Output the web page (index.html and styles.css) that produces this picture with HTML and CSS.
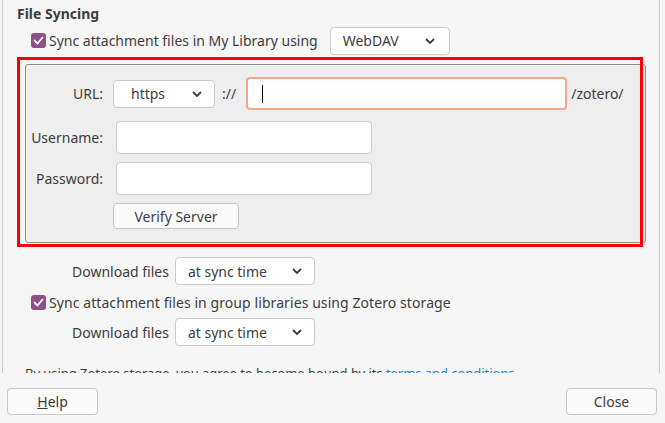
FILE: index.html
```html
<!DOCTYPE html>
<html>
<head>
<meta charset="utf-8">
<link rel="stylesheet" href="styles.css">
</head>
<body>
<div class="window">
  <div class="pane">
    <div class="heading">File Syncing</div>
    <div class="row sync-row">
      <span class="checkbox"><svg viewBox="0 0 15 15" width="15" height="15"><polyline points="3.5,7.5 6.5,10.5 11.5,4.5" fill="none" stroke="#fff" stroke-width="1.8" stroke-linecap="round" stroke-linejoin="round"/></svg></span>
      <span class="cb-label">Sync attachment files in My Library using</span>
      <div class="select select-webdav"><span>WebDAV</span><svg class="chev" viewBox="0 0 10 6" width="10" height="6"><polyline points="1,1 5,5 9,1" fill="none" stroke="#3d3d3d" stroke-width="1.8"/></svg></div>
    </div>
    <div class="groupbox">
      <div class="grow url-row">
        <span class="glabel">URL:</span>
        <div class="select select-scheme"><span>https</span><svg class="chev" viewBox="0 0 10 6" width="10" height="6"><polyline points="1,1 5,5 9,1" fill="none" stroke="#3d3d3d" stroke-width="1.8"/></svg></div>
        <span class="sep">://</span>
        <div class="input input-url focused"><span class="caret"></span></div>
        <span class="suffix">/zotero/</span>
      </div>
      <div class="grow">
        <span class="glabel">Username:</span>
        <div class="input input-field"></div>
      </div>
      <div class="grow">
        <span class="glabel">Password:</span>
        <div class="input input-field"></div>
      </div>
      <div class="grow">
        <span class="glabel"></span>
        <div class="button verify">Verify Server</div>
      </div>
    </div>
    <div class="row dl-row first-dl">
      <span class="dl-label">Download files</span>
      <div class="select select-dl"><span>at sync time</span><svg class="chev" viewBox="0 0 10 6" width="10" height="6"><polyline points="1,1 5,5 9,1" fill="none" stroke="#3d3d3d" stroke-width="1.8"/></svg></div>
    </div>
    <div class="row sync-row2">
      <span class="checkbox"><svg viewBox="0 0 15 15" width="15" height="15"><polyline points="3.5,7.5 6.5,10.5 11.5,4.5" fill="none" stroke="#fff" stroke-width="1.8" stroke-linecap="round" stroke-linejoin="round"/></svg></span>
      <span class="cb-label cb-label2">Sync attachment files in group libraries using Zotero storage</span>
    </div>
    <div class="row dl-row">
      <span class="dl-label">Download files</span>
      <div class="select select-dl"><span>at sync time</span><svg class="chev" viewBox="0 0 10 6" width="10" height="6"><polyline points="1,1 5,5 9,1" fill="none" stroke="#3d3d3d" stroke-width="1.8"/></svg></div>
    </div>
    <p class="terms">By using Zotero storage, you agree to become bound by its <a class="link">terms and conditions</a>.</p>
    <div class="highlight"></div>
  </div>
  <div class="footer">
    <div class="button footer-btn"><span class="ul">H</span>elp</div>
    <div class="button footer-btn">Close</div>
  </div>
</div>
</body>
</html>
```

FILE: styles.css
```css
* { box-sizing: border-box; }
html, body { margin: 0; padding: 0; }
body {
  background: #f6f6f6;
  font-family: "Noto Sans", "Open Sans", sans-serif;
  font-size: 14px;
  color: #3d3d3d;
  width: 665px;
  height: 423px;
  overflow: hidden;
}
.window { width: 665px; height: 423px; }
.pane {
  position: relative;
  margin-left: 2px;
  width: 658px;
  height: 373px;
  overflow: hidden;
  border-left: 1px solid #cdcdcd;
  border-right: 1px solid #cdcdcd;
  padding-left: 14px;
}
.heading {
  font-weight: bold;
  height: 27px;
  padding-top: 4px;
  line-height: 20px;
}
.row { display: flex; align-items: center; }
.sync-row { height: 27px; padding-left: 14px; }
.checkbox {
  width: 15px; height: 15px;
  background: #924d8b;
  border-radius: 3px;
  display: inline-flex;
  flex: none;
}
.checkbox svg { display: block; }
.cb-label { margin-left: 3px; white-space: nowrap; }
.cb-label2 { letter-spacing: 0.08px; }
.select {
  display: flex;
  align-items: center;
  justify-content: space-between;
  background: #fff;
  border: 1px solid #cbcbcb;
  border-radius: 4px;
  height: 28px;
  padding: 0 12px;
  flex: none;
}
.chev { display: block; }
.select-webdav { margin-left: 12px; width: 120px; height: 28px; padding-right: 14px; }
.groupbox {
  margin-top: 10px;
  margin-left: 8px;
  width: 621px;
  height: 179px;
  background: #eeeeee;
  border: 1px solid #8c8c8c;
  border-radius: 3px;
  padding-top: 12px;
  display: flex;
  flex-direction: column;
  gap: 8px;
}
.grow { display: flex; align-items: center; }
.url-row { height: 33px; margin-bottom: 3px; }
.glabel { width: 77px; text-align: right; flex: none; }
.select-scheme { margin-left: 10px; width: 102px; padding-left: 17px; padding-right: 12px; }
.sep { margin-left: 7px; }
.input {
  background: #fff;
  border: 1px solid #cbcbcb;
  border-radius: 4px;
  height: 33px;
  flex: none;
}
.focused { border: 2px solid #f3a68d; }
.input-url { margin-left: 10px; width: 321px; position: relative; }
.caret { position: absolute; left: 14px; top: 6px; width: 1px; height: 18px; background: #000; }
.suffix { margin-left: 4px; }
.input-field { margin-left: 13px; width: 256px; }
.button {
  display: flex;
  align-items: center;
  justify-content: center;
  background: #fafafa;
  border: 1px solid #c6c6c6;
  border-radius: 4px;
  height: 26px;
  flex: none;
}
.verify { margin-left: 10px; width: 126px; }
.dl-row { height: 28px; padding-left: 55px; }
.first-dl { margin-top: 14px; }
.dl-label { white-space: nowrap; }
.select-dl { margin-left: 6px; width: 140px; }
.sync-row2 { height: 21px; margin-top: 7px; margin-bottom: 5px; padding-left: 14px; }
.terms { margin: 17px 0 0 8px; white-space: nowrap; line-height: 20px; font-size: 13px; letter-spacing: -0.05px; }
.link { color: #1b82c4; }
.highlight {
  position: absolute;
  left: 14px; top: 57px;
  width: 626px; height: 190px;
  border: 3px solid #ff0000;
  pointer-events: none;
}
.footer {
  display: flex;
  justify-content: space-between;
  padding: 15px 8px 0 7px;
}
.footer-btn { width: 91px; height: 27px; }
.ul { text-decoration: underline; }
```
